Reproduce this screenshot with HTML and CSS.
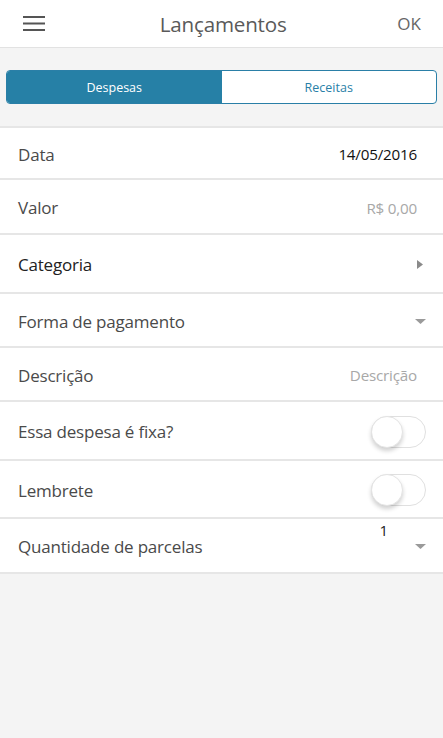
FILE: index.html
```html
<!DOCTYPE html>
<html lang="pt">
<head>
<meta charset="utf-8">
<link rel="stylesheet" href="styles.css">
</head>
<body>
<div class="app">
  <header class="topbar">
    <button class="menu" aria-label="menu">
      <svg width="22" height="16" viewBox="0 0 22 16"><rect x="0" y="0" width="22" height="2" fill="#555"/><rect x="0" y="6.5" width="22" height="2" fill="#555"/><rect x="0" y="13" width="22" height="2" fill="#555"/></svg>
    </button>
    <h1 class="title">Lançamentos</h1>
    <span class="ok">OK</span>
  </header>
  <div class="segwrap">
    <div class="seg">
      <span class="segitem active">Despesas</span>
      <span class="segitem">Receitas</span>
    </div>
  </div>
  <ul class="list">
    <li class="row r1"><span class="label">Data</span><span class="value dark">14/05/2016</span></li>
    <li class="row r2"><span class="label">Valor</span><span class="value light">R$ 0,00</span></li>
    <li class="row r3"><span class="label strong">Categoria</span><svg class="chev" width="6" height="9" viewBox="0 0 6 9"><path d="M0 0 L6 4.5 L0 9 Z" fill="#8a8a8a"/></svg></li>
    <li class="row r4"><span class="label">Forma de pagamento</span><svg class="drop" width="11" height="5" viewBox="0 0 11 5"><path d="M0 0 L11 0 L5.5 5 Z" fill="#9a9a9a"/></svg></li>
    <li class="row r5"><span class="label">Descrição</span><span class="value light">Descrição</span></li>
    <li class="row r6"><span class="label">Essa despesa é fixa?</span><span class="toggle"><span class="knob"></span></span></li>
    <li class="row r7"><span class="label">Lembrete</span><span class="toggle"><span class="knob"></span></span></li>
    <li class="row r8"><span class="label">Quantidade de parcelas</span><span class="qty"><span class="num">1</span><svg class="drop" width="11" height="5" viewBox="0 0 11 5"><path d="M0 0 L11 0 L5.5 5 Z" fill="#9a9a9a"/></svg></span></li>
  </ul>
</div>
</body>
</html>
```
FILE: styles.css
```css
* { box-sizing: border-box; }
html, body { margin: 0; padding: 0; }
body {
  width: 443px;
  height: 738px;
  background: #f4f4f4;
  font-family: "Open Sans", "Noto Sans", sans-serif;
  overflow: hidden;
}
.app { display: flex; flex-direction: column; }
.topbar {
  height: 48px;
  background: #fff;
  border-bottom: 1px solid #e2e2e2;
  display: flex;
  align-items: center;
  justify-content: space-between;
  padding: 0 22px 0 23px;
}
.menu {
  border: 0;
  background: none;
  padding: 0;
  width: 22px;
  height: 16px;
  display: block;
}
.menu svg { display: block; }
.title {
  margin: 0 0 0 4px;
  font-weight: 400;
  font-size: 20.6px;
  color: #5a5a5a;
  letter-spacing: -0.2px;
}
.ok {
  font-size: 17px;
  color: #666;
}
.segwrap {
  padding: 22px 6px 21px 6px;
  height: 78px;
}
.seg {
  display: flex;
  height: 34px;
  border: 1px solid #2a7fa7;
  border-radius: 4px;
  overflow: hidden;
  background: #fff;
}
.segitem {
  flex: 1;
  display: flex;
  align-items: center;
  justify-content: center;
  font-size: 12.5px;
  color: #2a7fa7;
}
.segitem.active {
  background: #2680a6;
  color: #fff;
}
.list {
  list-style: none;
  margin: 0;
  padding: 0;
  background: #fff;
  border-top: 2px solid #e6e6e6;
}
.row {
  display: flex;
  align-items: center;
  justify-content: space-between;
  padding: 2px 26px 0 18px;
  border-bottom: 2px solid #e6e6e6;
}
.r1 { height: 52px; }
.r2 { height: 55px; }
.r3 { height: 59px; }
.r4 { height: 54px; }
.r5 { height: 54px; }
.r6 { height: 59px; }
.r7 { height: 58px; }
.r8 { height: 55px; }
.label {
  font-size: 17px;
  color: #4a4a4a;
  letter-spacing: -0.2px;
}
.label.strong { color: #222; }
.value { font-size: 15.2px; letter-spacing: -0.2px; }
.value.dark { color: #111; }
.value.light { color: #a8a8a8; }
.chev { margin-right: -6px; }
.drop { margin-right: -9px; display: block; }
.toggle {
  width: 55px;
  height: 32px;
  border: 1px solid #e0e0e0;
  border-radius: 16px;
  background: #fff;
  position: relative;
  margin-right: -9px;
}
.knob {
  position: absolute;
  left: -1px;
  top: -1px;
  width: 32px;
  height: 32px;
  border-radius: 50%;
  background: #fff;
  border: 1px solid #e4e4e4;
  box-shadow: 0 3px 4px rgba(0,0,0,0.18);
}
.qty {
  display: flex;
  align-items: center;
  position: relative;
}
.num {
  position: absolute;
  right: 29px;
  top: -24px;
  font-size: 15px;
  color: #222;
}
```
